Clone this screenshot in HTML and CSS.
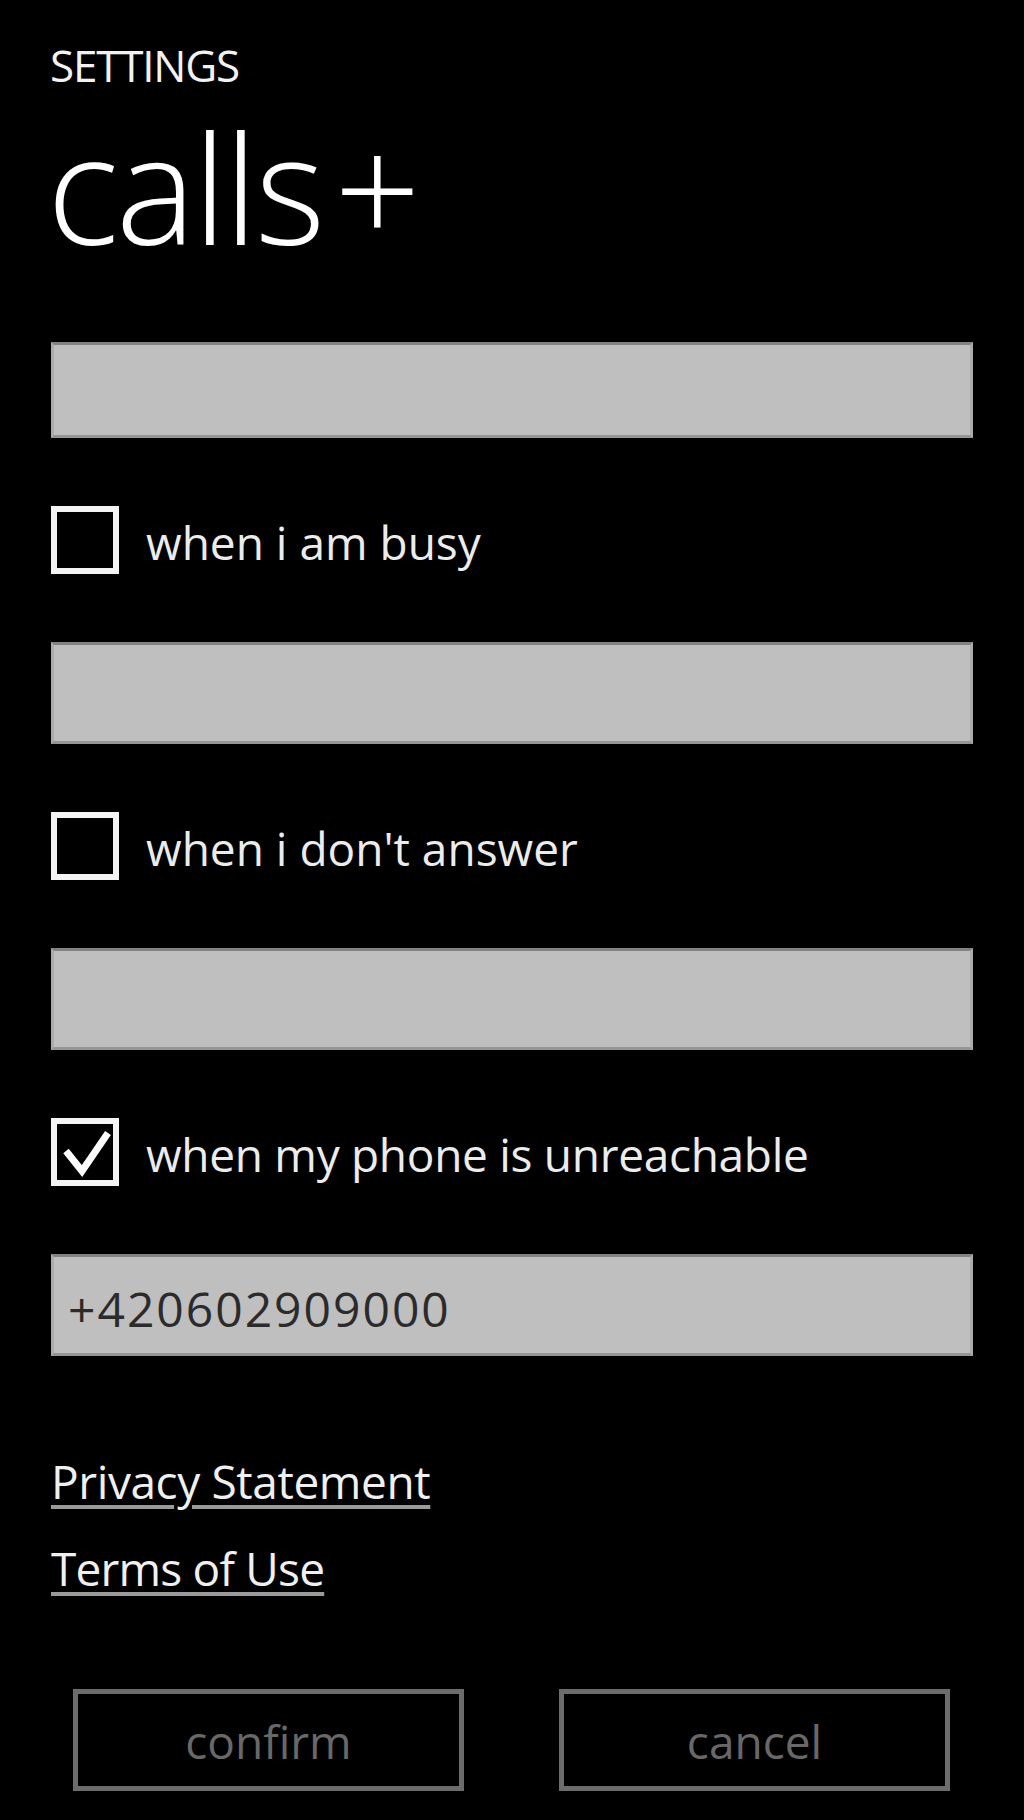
FILE: index.html
```html
<!DOCTYPE html>
<html lang="en">
<head>
<meta charset="utf-8">
<title>calls+ settings</title>
<link rel="stylesheet" href="styles.css">
</head>
<body>
<div class="page">
  <header class="header">
    <div class="app-title">SETTINGS</div>
    <h1 class="page-title"><span class="title-word">calls</span><span class="title-plus">+</span></h1>
  </header>

  <div class="textbox textbox-first"></div>

  <div class="check-row">
    <span class="checkbox"></span>
    <span class="check-label">when i am busy</span>
  </div>

  <div class="textbox"></div>

  <div class="check-row">
    <span class="checkbox"></span>
    <span class="check-label">when i don't answer</span>
  </div>

  <div class="textbox"></div>

  <div class="check-row">
    <span class="checkbox">
      <svg class="checkmark" viewBox="0 0 56 56" width="56" height="56" aria-hidden="true">
        <polyline points="9,27 25,47 51,9" fill="none" stroke="#ffffff" stroke-width="7" stroke-linejoin="miter" stroke-linecap="butt"/>
      </svg>
    </span>
    <span class="check-label check-label-long">when my phone is unreachable</span>
  </div>

  <div class="textbox textbox-filled"><span class="textbox-value">+420602909000</span></div>

  <div class="links">
    <a class="link link-privacy" href="#">Privacy Statement</a>
    <a class="link link-terms" href="#">Terms of Use</a>
  </div>

  <div class="buttons">
    <button class="btn" type="button">confirm</button>
    <button class="btn" type="button">cancel</button>
  </div>
</div>
</body>
</html>
```
FILE: styles.css
```css
html, body {
  margin: 0;
  padding: 0;
  background: #000;
}

body {
  font-family: "Open Sans", "Noto Sans", sans-serif;
  color: #fff;
}

.page {
  width: 1024px;
  height: 1820px;
  box-sizing: border-box;
  padding: 43px 51px 0 51px;
  display: flex;
  flex-direction: column;
  overflow: hidden;
}

.header {
  display: flex;
  flex-direction: column;
}

.app-title {
  font-size: 44px;
  line-height: 44px;
  height: 44px;
  font-weight: 400;
  letter-spacing: -1.2px;
  color: #f2f2f2;
  margin-left: -1px;
}

.page-title {
  margin: 24px 0 0 -4px;
  font-size: 151px;
  line-height: 151px;
  height: 151px;
  font-weight: 300;
  color: #fff;
  white-space: nowrap;
}

.title-word {
  letter-spacing: -3px;
}

.title-plus {
  margin-left: 12px;
}

.textbox {
  height: 102px;
  box-sizing: border-box;
  margin-top: 68px;
  background: #bfbfbf;
  border: 3px solid #ababab;
  border-top-color: #828282;
  border-bottom-color: #959595;
}

.textbox-first {
  margin-top: 80px;
  height: 96px;
}

.textbox-filled {
  padding: 22px 0 0 14px;
}

.textbox-value {
  display: block;
  font-size: 48px;
  line-height: 60px;
  letter-spacing: 2px;
  color: #2b2b2b;
}

.check-row {
  display: flex;
  align-items: flex-start;
  gap: 27px;
  margin-top: 68px;
  height: 68px;
}

.checkbox {
  width: 68px;
  height: 68px;
  box-sizing: border-box;
  border: 6px solid #f4f4f4;
  background: #000;
  flex: none;
  display: flex;
}

.checkmark {
  display: block;
  width: 56px;
  height: 56px;
}

.check-label {
  font-size: 46px;
  line-height: 68px;
  margin-top: 2px;
  color: #ececec;
  white-space: nowrap;
}

.check-label-long {
  letter-spacing: -0.3px;
}

.links {
  display: flex;
  flex-direction: column;
  align-items: flex-start;
  margin-top: 95px;
  gap: 27px;
}

.link {
  font-size: 46px;
  line-height: 60px;
  color: #f0f0f0;
  text-decoration: underline;
  text-decoration-color: #9a9a9a;
  text-decoration-thickness: 4px;
  text-underline-offset: 6px;
  letter-spacing: -0.4px;
}

.link-terms {
  letter-spacing: -0.8px;
}

.buttons {
  display: flex;
  gap: 95px;
  padding: 0 23px 0 22px;
  margin-top: 91px;
}

.btn {
  flex: 1;
  height: 102px;
  box-sizing: border-box;
  background: #000;
  border: 5px solid #6c6c6c;
  color: #686868;
  font-family: "Open Sans", "Noto Sans", sans-serif;
  font-size: 46px;
  line-height: 86px;
  padding: 2px 0 0 0;
  margin: 0;
  text-align: center;
}
```
